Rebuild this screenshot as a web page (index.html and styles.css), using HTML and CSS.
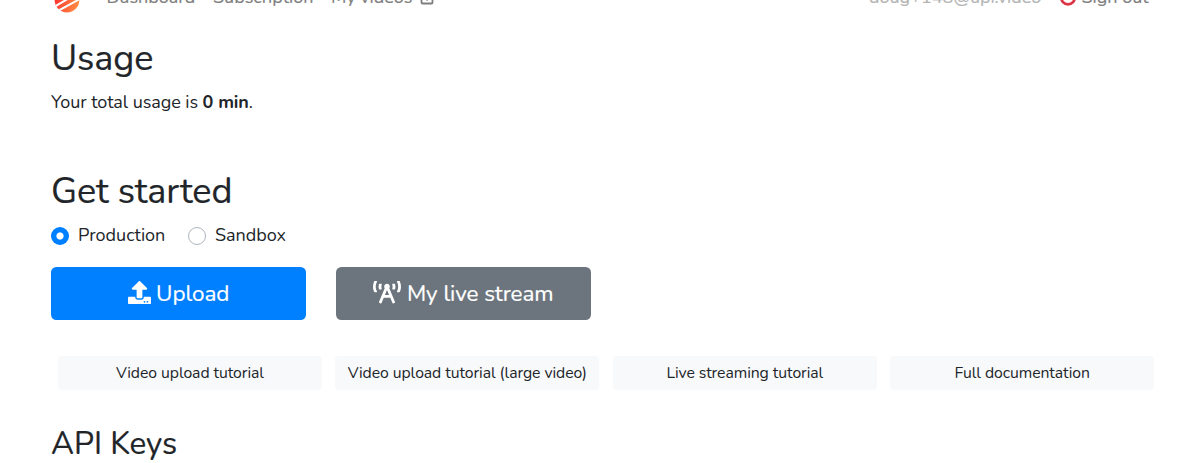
FILE: index.html
```
<!DOCTYPE html>
<html lang="en">
<head>
<meta charset="utf-8">
<title>Dashboard</title>
<link rel="stylesheet" href="styles.css">
</head>
<body>
<nav class="navbar">
  <svg class="logo" viewBox="0 0 26 26">
    <defs>
      <linearGradient id="brand" x1="0" y1="0.4" x2="1" y2="0.8"><stop offset="0" stop-color="#ff3030"/><stop offset="1" stop-color="#ff9142"/></linearGradient>
      <clipPath id="disc"><circle cx="13" cy="13" r="12.6"/></clipPath>
    </defs>
    <circle cx="13" cy="13" r="12.4" fill="url(#brand)"/>
    <path clip-path="url(#disc)" stroke="#fff" stroke-width="2" d="M-1 20.600 25 5.300M2 25 28 10.800"/>
  </svg>
  <a class="nav-link dashboard">Dashboard</a>
  <a class="nav-link subscription">Subscription</a>
  <a class="nav-link videos">My videos</a>
  <svg class="external" viewBox="0 0 14 14" fill="none" stroke="#7f7f7f" stroke-width="1.8"><path d="M6 1.500H2.500q-1 0-1 1v9q0 1 1 1h9q1 0 1-1V6M6.500 9.500l5.500-7M8.500 1.500h4v4"/></svg>
  <span class="email">doug+148@api.video</span>
  <svg class="power" viewBox="0 0 18 18" fill="none" stroke="#dc3545" stroke-width="2.700" stroke-linecap="round"><path d="M5 4a6.800 6.800 0 1 0 8 0M9 2v6"/></svg>
  <a class="nav-link signout">Sign out</a>
</nav>
<main>
  <h2 class="usage-title">Usage</h2>
  <p class="usage">Your total usage is <b>0 min</b>.</p>
  <h2 class="start-title">Get started</h2>
  <div class="radios">
    <label class="option"><i class="radio checked"></i><span class="production">Production</span></label>
    <label class="option"><i class="radio"></i><span class="sandbox">Sandbox</span></label>
  </div>
  <div class="actions">
    <a class="btn primary"><svg class="upload-icon" viewBox="0 0 512 512"><path d="M296 384h-80c-13.300 0-24-10.700-24-24V192h-87.700c-17.800 0-26.700-21.500-14.100-34.100L242.300 5.700c7.500-7.500 19.800-7.500 27.300 0l152.200 152.200c12.600 12.600 3.700 34.100-14.100 34.100H320v168c0 13.300-10.700 24-24 24zm216-8v112c0 13.300-10.700 24-24 24H24c-13.300 0-24-10.700-24-24V376c0-13.300 10.700-24 24-24h136v8c0 30.900 25.100 56 56 56h80c30.900 0 56-25.100 56-56v-8h136c13.300 0 24 10.700 24 24zm-124 88c0-11-9-20-20-20s-20 9-20 20 9 20 20 20 20-9 20-20zm64 0c0-11-9-20-20-20s-20 9-20 20 9 20 20 20 20-9 20-20z"/></svg><span class="upload">Upload</span></a>
    <a class="btn secondary"><svg class="tower-icon" viewBox="0 0 640 512"><path d="M150.940 192h33.730c11.010 0 18.610-10.830 14.860-21.180-4.930-13.580-7.550-27.980-7.550-42.820s2.620-29.240 7.550-42.820C203.290 74.830 195.680 64 184.670 64h-33.730c-7.010 0-13.460 4.490-15.410 11.230C130.640 92.210 128 109.880 128 128c0 18.120 2.640 35.790 7.540 52.760 1.940 6.740 8.390 11.240 15.400 11.240zM89.920 23.340C95.560 12.720 87.970 0 75.960 0H40.630c-6.270 0-12.140 3.590-14.740 9.310C9.400 45.540 0 85.650 0 128c0 24.750 3.120 68.330 26.690 118.860 2.620 5.630 8.420 9.140 14.610 9.140h34.840c12.020 0 19.610-12.740 13.950-23.370-49.780-93.320-16.710-178.150-.170-209.290zM614.060 9.290C611.460 3.580 605.600 0 599.330 0h-35.420c-11.980 0-19.660 12.660-14.020 23.250 18.270 34.290 48.420 119.420.280 209.230-5.720 10.680 1.800 23.520 13.910 23.520h35.230c6.270 0 12.130-3.580 14.730-9.290C630.570 210.480 640 170.360 640 128s-9.420-82.480-25.940-118.710zM489.060 64h-33.730c-11.010 0-18.610 10.830-14.860 21.180 4.930 13.580 7.550 27.980 7.550 42.820s-2.620 29.240-7.550 42.820c-3.760 10.350 3.850 21.180 14.860 21.180h33.730c7.020 0 13.460-4.490 15.410-11.240 4.900-16.970 7.530-34.640 7.530-52.760 0-18.120-2.640-35.790-7.540-52.760-1.940-6.750-8.390-11.240-15.400-11.240zm-116.300 100.120c7.050-10.290 11.200-22.710 11.200-36.120 0-35.350-28.630-64-63.960-64-35.320 0-63.960 28.650-63.960 64 0 13.410 4.150 25.830 11.200 36.120l-130.500 313.410c-3.400 8.150.460 17.520 8.610 20.920l29.510 12.310c8.150 3.400 17.520-.460 20.910-8.610L244.960 384h150.070l49.200 118.150c3.400 8.160 12.760 12.010 20.910 8.610l29.510-12.310c8.150-3.400 12-12.770 8.610-20.920l-130.500-313.410zM271.620 320L320 203.810 368.380 320h-96.760z"/></svg><span class="live">My live stream</span></a>
  </div>
  <div class="tutorials">
    <a class="card">Video upload tutorial</a>
    <a class="card">Video upload tutorial (large video)</a>
    <a class="card">Live streaming tutorial</a>
    <a class="card">Full documentation</a>
  </div>
  <h3 class="keys">API Keys</h3>
</main>
</body>
</html>
```

FILE: styles.css
```
* { box-sizing: border-box; }
html, body { height: 463px; overflow: hidden; }
body { margin: 0; background: #fff; color: #212529; font: 18px/27px Nunito, Lato, sans-serif; }
h2, h3, p { margin: 0; font-weight: 400; }
svg { flex: none; display: block; }

.navbar { display: flex; align-items: center; height: 27px; margin-top: -16px; padding-left: 54px; color: #7f7f7f; white-space: nowrap; }
.logo { width: 26px; height: 26px; margin-top: 4px; }
.dashboard { margin-left: 26.5px; width: 106.5px; }
.subscription { width: 118px; }
.videos { width: 89px; }
.external { width: 14px; height: 14px; margin-top: 1px; }
.email { margin-left: 435px; width: 190px; color: #b5b5b5; }
.power { width: 18px; height: 18px; margin-top: -1px; }
.signout { margin-left: 4.5px; }
.navbar, .btn, h2, h3 { -webkit-text-stroke: .2px currentColor; }

main { padding: 26px 35px 0 51px; }
h2 { font-size: 36px; line-height: 43px; letter-spacing: -.1px; }
.usage { margin-top: 9px; letter-spacing: -.07px; }
b { font-weight: 700; }
.start-title { margin-top: 54px; }

.radios { display: flex; gap: 23px; margin-top: 9px; }
.option { display: flex; align-items: center; }
.radio { width: 18px; height: 18px; margin: 1px 9px 0 0; border: 1px solid #adb5bd; border-radius: 50%; }
.checked { border: 0; background: radial-gradient(circle, #fff 3.2px, #007fff 4px); }
.production { width: 87px; }

.actions { display: flex; gap: 30px; margin-top: 18px; }
.btn { display: flex; align-items: center; justify-content: center; width: 255px; height: 53px; border-radius: 5.4px; color: #fff; font-size: 22.5px; letter-spacing: -.05px; }
.btn svg { fill: currentColor; stroke: none; }
.primary { background: #007fff; }
.secondary { background: #6c757d; }
.upload-icon { width: 23px; height: 23px; margin: -2px 5.5px 0 0; }
.tower-icon { width: 28px; height: 22.5px; margin: -2px 5.5px 0 0; }

.tutorials { display: grid; grid-template-columns: repeat(4, 264px); column-gap: 13.4px; margin: 36px 0 35px 7px; }
.card { height: 34px; line-height: 34px; border-radius: 3.6px; background: #f8f9fb; font-size: 15.75px; text-align: center; letter-spacing: -.06px; white-space: nowrap; }
.keys { font-size: 31.5px; line-height: 38px; }
```
